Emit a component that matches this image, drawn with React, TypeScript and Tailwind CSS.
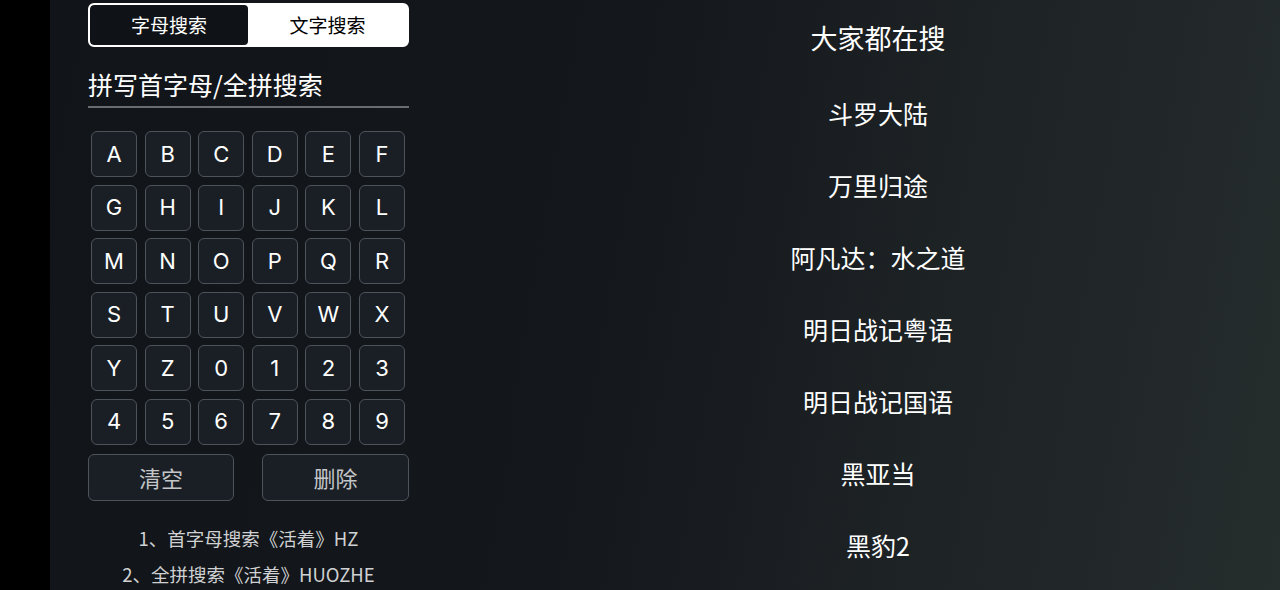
import React from "react";

const keys = [
  "A","B","C","D","E","F",
  "G","H","I","J","K","L",
  "M","N","O","P","Q","R",
  "S","T","U","V","W","X",
  "Y","Z","0","1","2","3",
  "4","5","6","7","8","9",
];

const items = ["斗罗大陆", "万里归途", "阿凡达：水之道", "明日战记粤语", "明日战记国语", "黑亚当", "黑豹2"];

const cjk = { fontFamily: '"Noto Sans CJK SC", "Noto Sans", sans-serif' };

export default function App() {
  return (
    <div
      className="flex w-[1280px] h-[590px] overflow-hidden text-white"
      style={cjk}
    >
      <div className="w-[50px] h-full bg-black shrink-0" />
      <div className="flex flex-1 h-full bg-[linear-gradient(100deg,#111418_0%,#14171b_45%,#1d2225_70%,#262d2d_100%)]">
        {/* left panel */}
        <div className="ml-[38px] w-[321px] flex flex-col pt-[3px]">
          <div className="flex h-[44px] rounded-[6px] border-2 border-white bg-white overflow-hidden">
            <div className="w-[158px] h-full bg-[#0f1216] rounded-[4px] flex items-center justify-center text-[19px] text-white">
              字母搜索
            </div>
            <div className="flex-1 flex items-center justify-center text-[19px] text-black">
              文字搜索
            </div>
          </div>
          <div className="mt-[21px] h-[32px] leading-[32px] text-[25px] text-white">
            拼写首字母/全拼搜索
          </div>
          <div className="mt-[6px] h-[1.5px] bg-[#6a6d70]" />
          <div className="mt-[23.5px] ml-[3px] w-[314px] grid grid-cols-6 gap-[7.6px]">
            {keys.map((k) => (
              <div
                key={k}
                className="h-[46px] rounded-[6px] border border-[#4d535b] bg-[#1a1f26] flex items-center justify-center text-[22px] text-white"
                style={{ fontFamily: 'Inter, "Noto Sans", sans-serif' }}
              >
                {k}
              </div>
            ))}
          </div>
          <div className="mt-[9px] flex justify-between">
            <div className="w-[146px] h-[47px] rounded-[6px] border border-[#4d535b] bg-[#1a1f26] flex items-center justify-center text-[22px] text-[#c4c6c8]">
              清空
            </div>
            <div className="w-[147px] h-[47px] rounded-[6px] border border-[#4d535b] bg-[#1a1f26] flex items-center justify-center text-[22px] text-[#c4c6c8]">
              删除
            </div>
          </div>
          <div className="mt-[25px] flex flex-col items-center text-[18.5px] text-[#cfd1d3] leading-[24px] gap-[12px]">
            <div>1、首字母搜索《活着》HZ</div>
            <div>2、全拼搜索《活着》HUOZHE</div>
          </div>
        </div>
        {/* right list */}
        <div className="ml-[67px] flex-1 flex flex-col items-center">
          <div className="mt-[21px] h-[34px] leading-[34px] text-[27px] text-white">大家都在搜</div>
          <div className="mt-[42px] flex flex-col items-center gap-[40px]">
            {items.map((t) => (
              <div key={t} className="h-[32px] leading-[32px] text-[25px] text-white">
                {t}
              </div>
            ))}
          </div>
        </div>
      </div>
    </div>
  );
}
